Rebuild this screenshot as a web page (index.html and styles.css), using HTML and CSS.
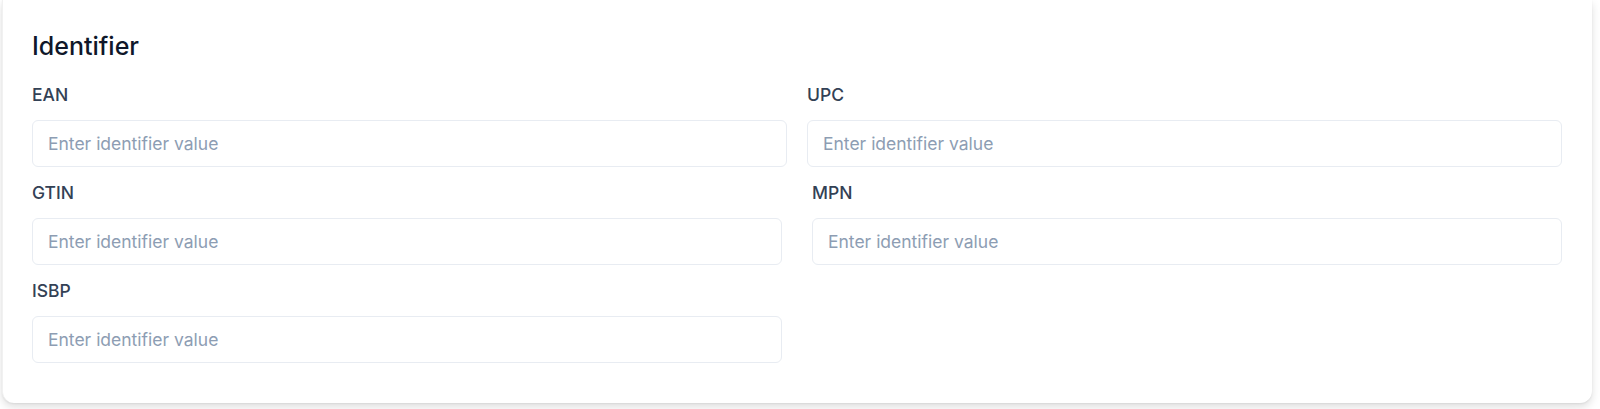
FILE: index.html
```html
<!DOCTYPE html>
<html lang="en">
<head>
<meta charset="utf-8">
<title>Identifier</title>
<link rel="stylesheet" href="styles.css">
</head>
<body>
<section class="card">
  <h2 class="title">Identifier</h2>
  <div class="row row-a">
    <div class="field">
      <label class="label" for="ean">EAN</label>
      <input class="input" id="ean" type="text" placeholder="Enter identifier value">
    </div>
    <div class="field">
      <label class="label" for="upc">UPC</label>
      <input class="input" id="upc" type="text" placeholder="Enter identifier value">
    </div>
  </div>
  <div class="row row-b">
    <div class="field">
      <label class="label" for="gtin">GTIN</label>
      <input class="input" id="gtin" type="text" placeholder="Enter identifier value">
    </div>
    <div class="field">
      <label class="label" for="mpn">MPN</label>
      <input class="input" id="mpn" type="text" placeholder="Enter identifier value">
    </div>
  </div>
  <div class="row row-b">
    <div class="field">
      <label class="label" for="isbp">ISBP</label>
      <input class="input" id="isbp" type="text" placeholder="Enter identifier value">
    </div>
    <div class="field field-empty"></div>
  </div>
</section>
</body>
</html>
```

FILE: styles.css
```css
* { box-sizing: border-box; }

html, body {
  margin: 0;
  padding: 0;
}

body {
  background: #ffffff;
  font-family: Inter, "Noto Sans", sans-serif;
  width: 1600px;
  height: 409px;
  overflow: hidden;
  padding: 0 8px 0 2px;
}

.card {
  background: #ffffff;
  border-radius: 0 0 12px 12px;
  border-left: 1px solid #f1f1f1;
  box-shadow: 0 4px 8px rgba(0, 0, 0, 0.13), 0 1px 2px rgba(0, 0, 0, 0.06);
  padding: 30px 30px 40px 29px;
  display: flex;
  flex-direction: column;
  gap: 16px;
}

.title {
  margin: 0 0 7px 0;
  font-size: 25px;
  line-height: 32px;
  font-weight: 500;
  color: #0f172a;
}

.row {
  display: flex;
}

.row-a { gap: 20px; }
.row-b { gap: 30px; }

.field {
  flex: 1 1 0;
  display: flex;
  flex-direction: column;
  gap: 15px;
}

.label {
  font-size: 17.5px;
  line-height: 20px;
  font-weight: 500;
  color: #334155;
}

.input {
  height: 47px;
  width: 100%;
  border: 1px solid #e8ecf2;
  border-radius: 6px;
  padding: 0 15px;
  font-family: inherit;
  font-size: 17.5px;
  color: #0f172a;
  background: #ffffff;
  outline: none;
}

.input::placeholder {
  color: #8d9db3;
  opacity: 1;
}
```
